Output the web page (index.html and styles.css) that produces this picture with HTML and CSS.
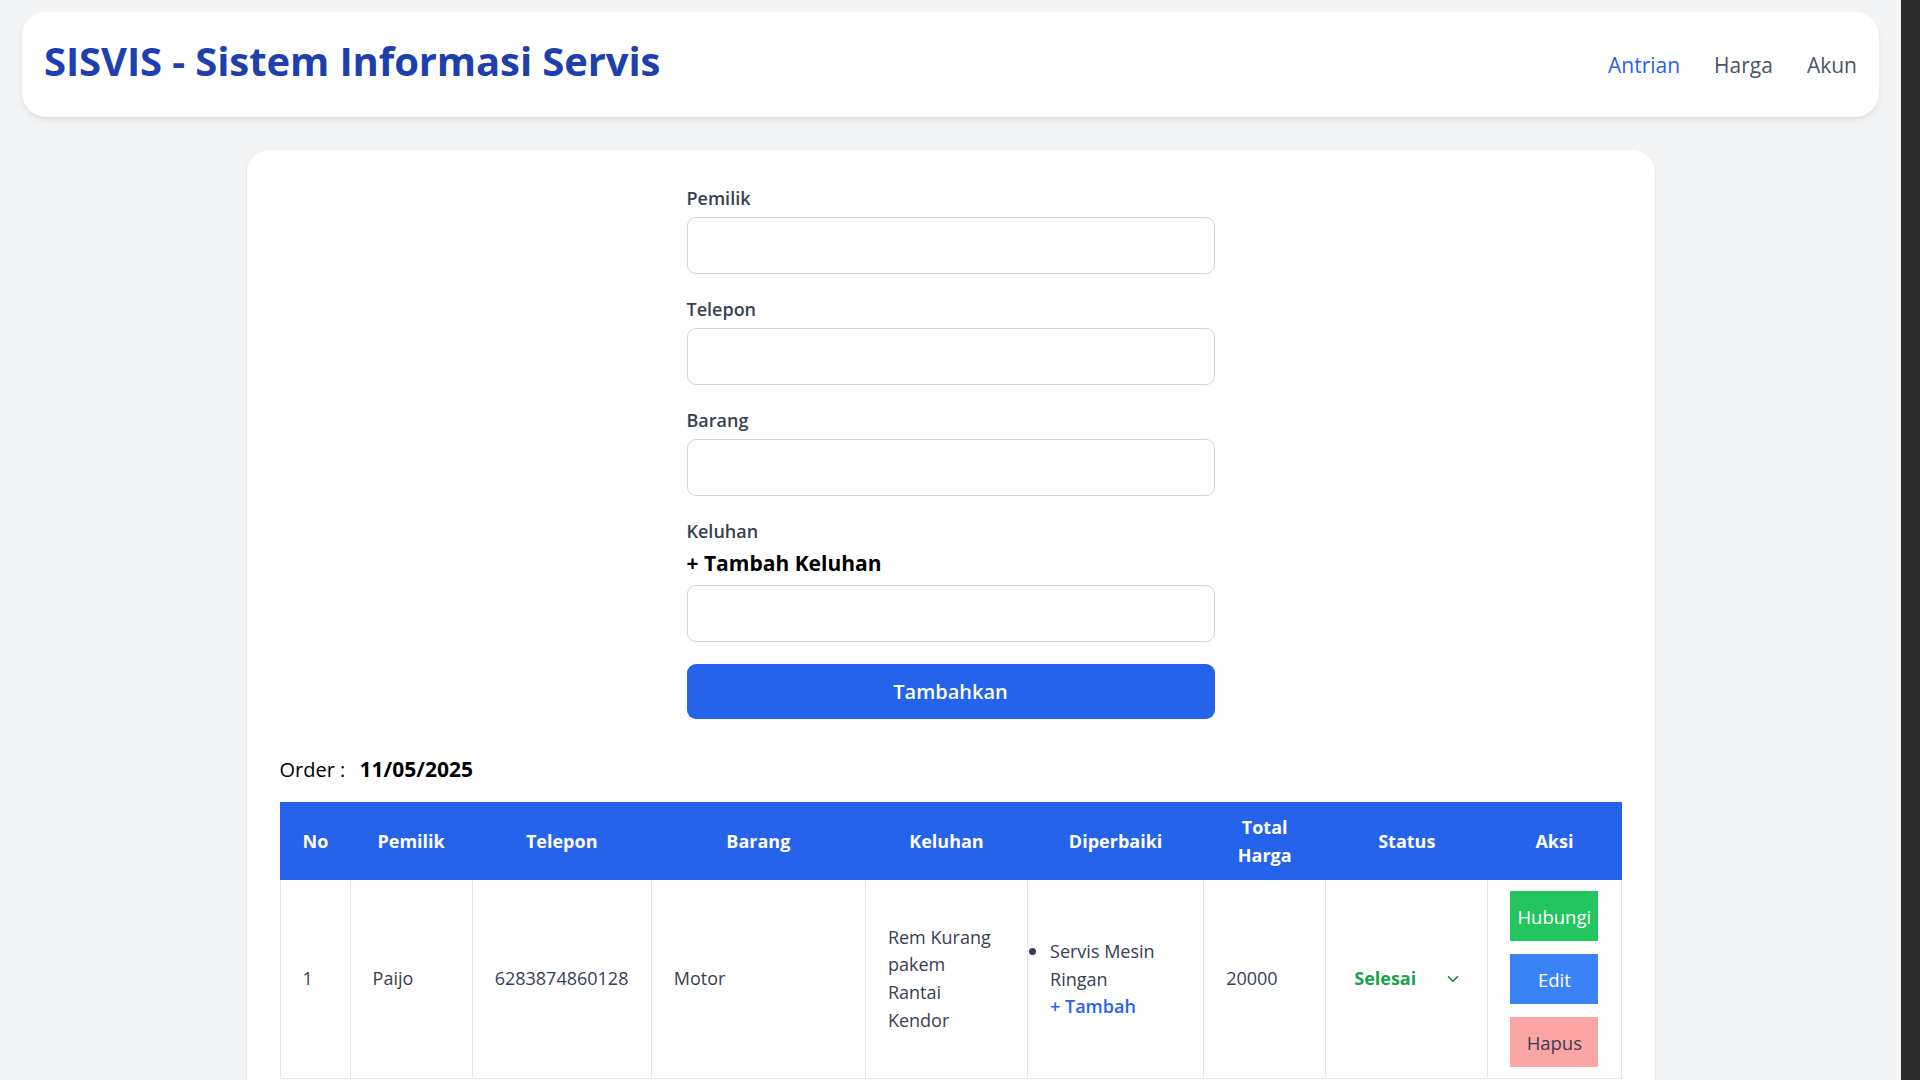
FILE: index.html
```html
<!DOCTYPE html>
<html lang="id">
<head>
<meta charset="utf-8">
<title>SISVIS - Sistem Informasi Servis</title>
<link rel="stylesheet" href="styles.css">
</head>
<body>
  <header class="topbar">
    <h1 class="brand">SISVIS - Sistem Informasi Servis</h1>
    <nav class="nav">
      <a class="nav-link active" href="#">Antrian</a>
      <a class="nav-link" href="#">Harga</a>
      <a class="nav-link" href="#">Akun</a>
    </nav>
  </header>

  <main class="card">
    <form class="form">
      <div class="field">
        <label class="label">Pemilik</label>
        <input class="input" type="text">
      </div>
      <div class="field">
        <label class="label">Telepon</label>
        <input class="input" type="text">
      </div>
      <div class="field">
        <label class="label">Barang</label>
        <input class="input" type="text">
      </div>
      <div class="field field-last">
        <label class="label">Keluhan</label>
        <div class="add-keluhan">+ Tambah Keluhan</div>
        <input class="input" type="text">
      </div>
      <button class="submit" type="button">Tambahkan</button>
    </form>

    <div class="order">Order : <span class="order-date">11/05/2025</span></div>

    <table class="table">
      <colgroup>
        <col class="c-no"><col class="c-pemilik"><col class="c-telepon"><col class="c-barang"><col class="c-keluhan"><col class="c-diperbaiki"><col class="c-total"><col class="c-status"><col class="c-aksi">
      </colgroup>
      <thead>
        <tr>
          <th>No</th>
          <th>Pemilik</th>
          <th>Telepon</th>
          <th>Barang</th>
          <th>Keluhan</th>
          <th>Diperbaiki</th>
          <th>Total Harga</th>
          <th>Status</th>
          <th>Aksi</th>
        </tr>
      </thead>
      <tbody>
        <tr>
          <td>1</td>
          <td>Paijo</td>
          <td>6283874860128</td>
          <td>Motor</td>
          <td>
            <div>Rem Kurang pakem</div>
            <div>Rantai Kendor</div>
          </td>
          <td>
            <ul class="fix-list">
              <li>Servis Mesin Ringan</li>
            </ul>
            <a class="add-fix" href="#">+ Tambah</a>
          </td>
          <td>20000</td>
          <td>
            <div class="status">
              <span>Selesai</span>
              <svg class="chev" width="12" height="8" viewBox="0 0 12 8" aria-hidden="true"><path d="M1.5 1.8 L6 6.2 L10.5 1.8" fill="none" stroke="currentColor" stroke-width="1.6" stroke-linecap="round" stroke-linejoin="round"/></svg>
            </div>
          </td>
          <td>
            <div class="actions">
              <button class="btn btn-green" type="button">Hubungi</button>
              <button class="btn btn-blue" type="button">Edit</button>
              <button class="btn btn-red" type="button">Hapus</button>
            </div>
          </td>
        </tr>
      </tbody>
    </table>
  </main>
</body>
</html>
```

FILE: styles.css
```css
* { box-sizing: border-box; }

html {
  margin: 0;
  padding: 0;
  background: #2b2b2b;
}

body {
  margin: 0 19px 0 0;
  padding: 12px 0 40px;
  min-height: 100vh;
  background: #f3f4f6;
  font-family: "Open Sans", "Noto Sans", sans-serif;
  color: #374151;
}

.topbar {
  margin: 0 22px;
  background: #ffffff;
  border-radius: 24px;
  box-shadow: 0 4px 6px -1px rgba(0,0,0,0.08), 0 2px 4px -2px rgba(0,0,0,0.06);
  padding: 26px 22px 34px;
  display: flex;
  align-items: center;
  justify-content: space-between;
}

.brand {
  margin: 0;
  font-size: 40px;
  line-height: 45px;
  font-weight: 700;
  letter-spacing: -0.1px;
  color: #1e40af;
}

.nav {
  display: flex;
  gap: 34px;
  margin-top: 9px;
}

.nav-link {
  font-size: 21px;
  line-height: 28px;
  font-weight: 500;
  color: #4b5563;
  text-decoration: none;
}

.nav-link.active { color: #2563eb; }

.card {
  width: 1408px;
  margin: 33px auto 0;
  background: #ffffff;
  border-radius: 22px;
  box-shadow: 0 1px 3px rgba(0,0,0,0.08), 0 1px 2px rgba(0,0,0,0.05);
  padding: 35px 33px 40px;
}

.form {
  width: 528px;
  margin: 0 auto;
}

.field {
  display: flex;
  flex-direction: column;
  margin-bottom: 22px;
}

.field-last { margin-bottom: 22px; }

.label {
  font-size: 18px;
  line-height: 26px;
  font-weight: 600;
  color: #374151;
  margin-bottom: 6px;
}

.add-keluhan {
  font-size: 21px;
  line-height: 30px;
  font-weight: 700;
  color: #000000;
  margin-top: -2px;
  margin-bottom: 7px;
}

.input {
  height: 57px;
  width: 100%;
  border: 1px solid #d1d5db;
  border-radius: 9px;
  background: #ffffff;
  font-family: inherit;
  font-size: 18px;
  padding: 0 14px;
  outline: none;
}

.submit {
  display: block;
  width: 100%;
  height: 55px;
  border: none;
  border-radius: 9px;
  background: #2563eb;
  color: #ffffff;
  font-family: inherit;
  font-size: 20px;
  font-weight: 600;
  cursor: pointer;
}

.order {
  margin-top: 35px;
  font-size: 20px;
  line-height: 30px;
  color: #000000;
}

.order-date {
  font-weight: 700;
  font-size: 21px;
  margin-left: 9px;
}

.table {
  margin-top: 17px;
  width: 100%;
  border-collapse: collapse;
  table-layout: fixed;
}

.c-no { width: 70px; }
.c-pemilik { width: 122px; }
.c-telepon { width: 179px; }
.c-barang { width: 214px; }
.c-keluhan { width: 162px; }
.c-diperbaiki { width: 176px; }
.c-total { width: 122px; }
.c-status { width: 162px; }
.c-aksi { width: 133px; }

.table th {
  background: #2563eb;
  color: #ffffff;
  font-size: 18px;
  font-weight: 700;
  line-height: 28px;
  padding: 10px 22px;
  text-align: center;
  border: 1px solid #2563eb;
}

.table td {
  border: 1px solid #e5e7eb;
  padding: 11px 22px;
  font-size: 18px;
  line-height: 27.7px;
  color: #374151;
  vertical-align: middle;
  text-align: left;
}

.fix-list {
  margin: 0;
  padding: 0;
  list-style: disc outside;
}

.fix-list li::marker { color: #374151; font-size: 21px; }

.add-fix {
  display: block;
  color: #2563eb;
  font-weight: 600;
  text-decoration: none;
}

.status {
  display: flex;
  align-items: center;
  justify-content: space-between;
  padding: 0 6px;
  color: #16a34a;
  font-weight: 700;
}

.chev { color: #15803d; flex: none; }

.actions {
  display: flex;
  flex-direction: column;
  align-items: flex-start;
  gap: 13px;
}

.btn {
  width: 88px;
  height: 50px;
  border: none;
  border-radius: 0;
  font-family: inherit;
  font-size: 18.5px;
  padding: 0;
  cursor: pointer;
}

.btn-green { background: #22c55e; color: #ffffff; }
.btn-blue { background: #3b82f6; color: #ffffff; }
.btn-red { background: #fca5a5; color: #374151; }
```
